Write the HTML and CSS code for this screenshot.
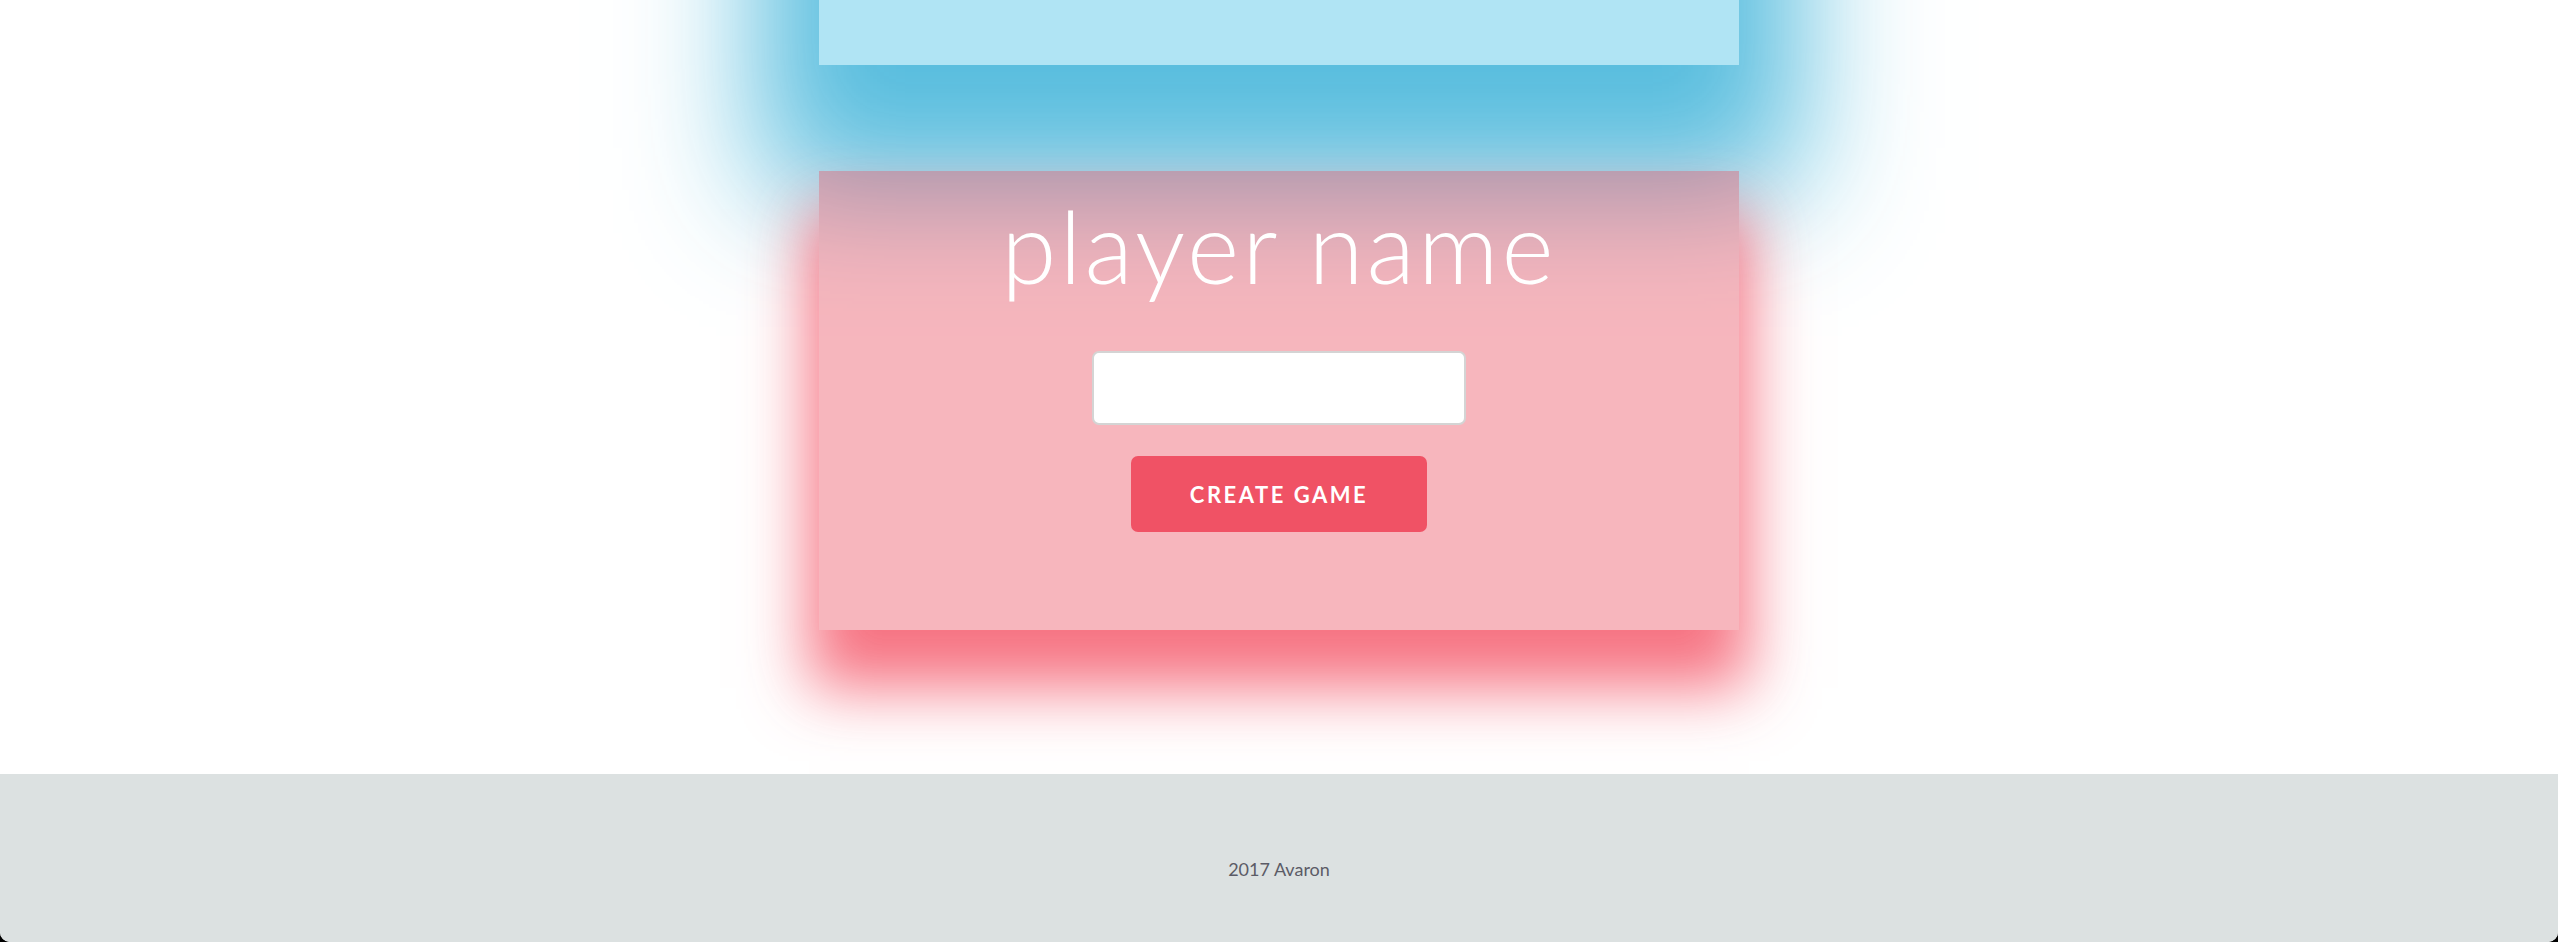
FILE: index.html
```html
<!DOCTYPE html>
<html lang="en">
<head>
<meta charset="utf-8">
<title>Avaron</title>
<link rel="stylesheet" href="styles.css">
</head>
<body>
<div class="page">
  <main class="stage">
    <section class="card card-join"></section>
    <section class="card card-create">
      <h1 class="title">player name</h1>
      <input class="name-input" type="text" aria-label="player name">
      <button class="btn-create" type="button">CREATE GAME</button>
    </section>
  </main>
  <footer class="footer">2017 Avaron</footer>
</div>
</body>
</html>
```

FILE: styles.css
```css
html {
  background: #000;
}
body {
  margin: 0;
  font-family: Lato, "Open Sans", "Liberation Sans", sans-serif;
}
.page {
  background: #fff;
  height: 942px;
  display: flex;
  flex-direction: column;
  border-radius: 0 0 10px 10px;
  overflow: hidden;
}
.stage {
  height: 774px;
  flex: none;
  display: flex;
  flex-direction: column;
  align-items: center;
  background: #fff;
}
.card {
  width: 920px;
  flex: none;
  box-sizing: border-box;
}
.card-join {
  height: 400px;
  margin-top: -335px;
  background: rgba(80, 195, 230, 0.45);
  box-shadow: 0 65px 120px 60px rgba(70, 182, 218, 0.9);
}
.card-create {
  margin-top: 106px;
  height: 459px;
  padding-top: 14px;
  display: flex;
  flex-direction: column;
  align-items: center;
  background: rgba(236, 80, 98, 0.42);
  box-shadow: 0 48px 60px 10px rgba(245, 90, 108, 0.85);
}
.title {
  margin: 0;
  font-weight: 300;
  font-size: 100px;
  line-height: 120px;
  letter-spacing: 3px;
  color: #fff;
}
.name-input {
  margin-top: 46px;
  width: 374px;
  height: 74px;
  box-sizing: border-box;
  border: 2px solid #d4d4d4;
  border-radius: 7px;
  background: #fff;
  outline: none;
  padding: 0 16px;
  font-size: 22px;
  font-family: inherit;
}
.btn-create {
  margin-top: 31px;
  width: 296px;
  height: 76px;
  border: none;
  border-radius: 7px;
  background: #f05265;
  color: #fff;
  font-family: inherit;
  font-weight: 700;
  font-size: 22px;
  letter-spacing: 2.5px;
  cursor: pointer;
}
.footer {
  flex: 1;
  background: #dce1e1;
  color: #5b5b66;
  font-size: 18px;
  line-height: 22px;
  text-align: center;
  padding-top: 84px;
  box-sizing: border-box;
}
```
